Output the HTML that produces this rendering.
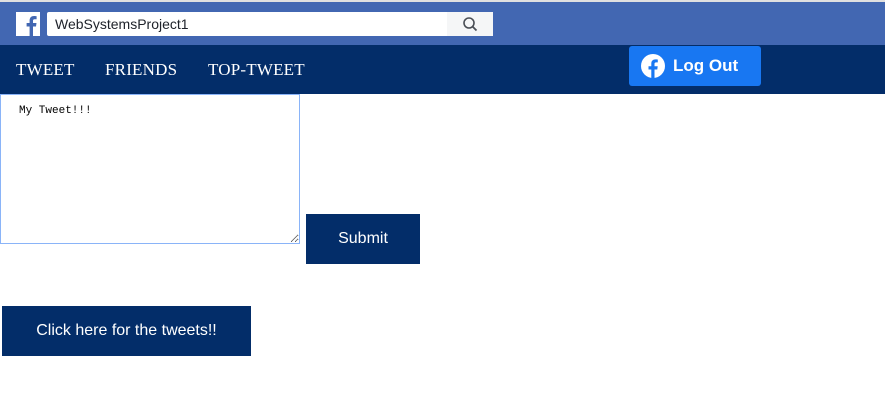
<!DOCTYPE html>
<html><head><style>
body{margin:0;width:885px;height:415px;background:#fff;position:relative;overflow:hidden;font-family:"Liberation Sans",sans-serif}
.top{position:absolute;left:0;top:0;width:885px;height:2px;background:#e0e0e0}
.fb{position:absolute;left:0;top:2px;width:885px;height:43px;background:#4267b2}
.logo{position:absolute;left:16px;top:10px;width:24px;height:24px;background:#fff}
.search{position:absolute;left:47px;top:10px;width:446px;height:24px;background:#fff;border-radius:2px}
.search span{position:absolute;left:8px;top:4px;font-size:14px;color:#1d2129}
.sbtn{position:absolute;right:0;top:0;width:46px;height:24px;background:#f5f6f7}
.nav{position:absolute;left:0;top:45px;width:885px;height:49px;background:#032d69}
.nav a{position:absolute;top:15px;color:#fff;font-family:"Liberation Serif",serif;font-size:17px;letter-spacing:0.2px}
.lo{position:absolute;left:629px;top:46px;width:132px;height:40px;background:#1877f2;border-radius:3px;color:#fff;font-weight:bold;font-size:17px}
textarea{position:absolute;left:0;top:94px;width:300px;height:150px;box-sizing:border-box;border:1px solid #8ab4f8;padding:10px 18px;font-family:"Liberation Mono",monospace;font-size:11px;resize:both;margin:0;outline:none}
.b{position:absolute;background:#032d69;color:#fff;font-size:16px;display:flex;align-items:center;justify-content:center}
</style></head><body>
<div class="top"></div>
<div class="fb">
<div class="logo"><svg width="24" height="24" viewBox="0 0 24 24"><path d="M17 24V14.5h3l.5-3.5H17V9c0-1 .3-1.7 1.8-1.7h1.8V4.2c-.3 0-1.4-.2-2.6-.2-2.6 0-4.4 1.6-4.4 4.5V11h-3v3.5h3V24z" fill="#4267b2"/></svg></div>
<div class="search"><span>WebSystemsProject1</span><div class="sbtn"><svg width="46" height="24" viewBox="0 0 46 24"><circle cx="22" cy="11" r="5" fill="none" stroke="#4b4f56" stroke-width="1.6"/><path d="M25.5 14.5l4 4" stroke="#4b4f56" stroke-width="1.8"/></svg></div></div>
</div>
<div class="nav">
<a style="left:16px">TWEET</a><a style="left:105px">FRIENDS</a><a style="left:208px">TOP-TWEET</a>
</div>
<div class="lo"><svg style="position:absolute;left:12px;top:8px" width="24" height="24" viewBox="0 0 24 24"><circle cx="12" cy="12" r="12" fill="#fff"/><path d="M13.5 24v-8.5h2.8l.4-3.3h-3.2V10c0-.9.3-1.6 1.6-1.6h1.7V5.5c-.3 0-1.3-.1-2.4-.1-2.4 0-4.1 1.5-4.1 4.2v2.6H7.5v3.3h2.8V24z" fill="#1877f2"/></svg><span style="position:absolute;left:44px;top:10px">Log Out</span></div>
<textarea>My Tweet!!!</textarea>
<div class="b" style="left:306px;top:214px;width:114px;height:50px">Submit</div>
<div class="b" style="left:2px;top:306px;width:249px;height:50px">Click here for the tweets!!</div>
</body></html>
